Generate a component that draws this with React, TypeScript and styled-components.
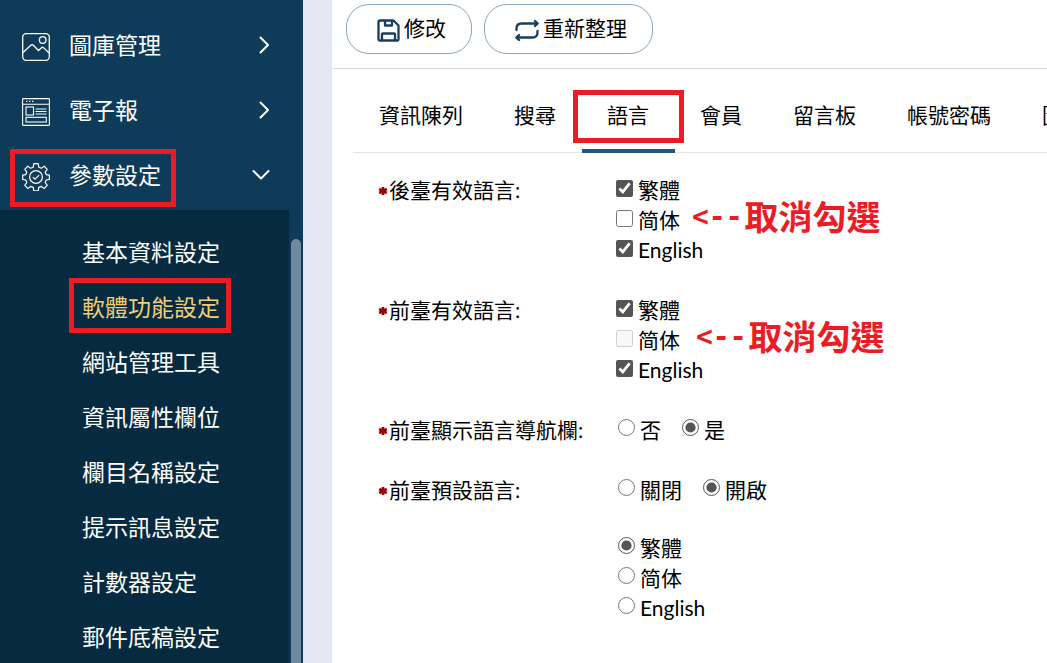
import React from 'react';
import styled, { createGlobalStyle } from 'styled-components';

const Global = createGlobalStyle`
  *, *::before, *::after { box-sizing: border-box; }
  body {
    margin: 0;
    background: #fff;
    color: #000;
    font-family: Lato, "Noto Sans CJK TC", sans-serif;
    font-size: 21px;
    line-height: 30px;
  }
  button { font: inherit; color: inherit; background: none; border: 0; padding: 0; cursor: pointer; white-space: nowrap; }
`;

const Page = styled.div`
  display: flex;
  height: 100vh;
  overflow: hidden;
`;

const Sidebar = styled.aside`
  flex: none;
  display: flex;
  width: 303px;
  background: #0d3b59;
  color: #fff;
  font-size: 23px;
`;

const Nav = styled.nav`
  flex: 1;
  display: flex;
  flex-direction: column;
  padding-top: 12px;
`;

const Track = styled.div`
  flex: none;
  width: 14px;
  display: flex;
  padding: 239px 2px 0;
`;

const Thumb = styled.div`
  flex: 1;
  border-radius: 5px 5px 0 0;
  background: #6f8a9f;
`;

const MenuButton = styled.button`
  && {
    position: relative;
    flex: none;
    display: flex;
    align-items: center;
    height: 65px;
    padding: 0 17px 0 22px;
    text-align: left;
  }
  svg:first-child {
    margin-top: 4px;
  }
`;

const MenuLabel = styled.span`
  flex: 1;
  margin-left: 19px;
`;

const SubMenu = styled.ul`
  flex: 1;
  margin: 3px 0 0;
  padding: 15px 0 0;
  list-style: none;
  background: #062a40;
`;

const SubLink = styled.a<{ $current?: boolean }>`
  position: relative;
  display: block;
  padding-left: 82px;
  line-height: 55px;
  color: ${(p) => (p.$current ? '#efce7b' : '#fff')};
  text-decoration: none;
`;

const Marker = styled.span<{ $top: number; $left: number; $width: number; $height: number }>`
  position: absolute;
  top: ${(p) => p.$top}px;
  left: ${(p) => p.$left}px;
  width: ${(p) => p.$width}px;
  height: ${(p) => p.$height}px;
  border: 5px solid #ed1c24;
  pointer-events: none;
`;

const Gutter = styled.div`
  flex: none;
  width: 29px;
  background: #e4e7f1;
`;

const Main = styled.main`
  flex: 1;
  min-width: 0;
  overflow: hidden;
`;

const Toolbar = styled.div`
  display: flex;
  gap: 12px;
  padding: 4px 14px 14px;
  border-bottom: 1px solid #dcdcdc;
`;

const ToolButton = styled.button`
  && {
    display: flex;
    align-items: center;
    gap: 4px;
    height: 50px;
    padding: 0 25px 2px 30px;
    border: 1px solid #8aa5bd;
    border-radius: 23px;
  }
  svg {
    margin-top: 4px;
  }
`;

const Tabs = styled.div`
  display: flex;
  margin: 14px 0 0 21px;
  padding-left: 1px;
  border-bottom: 1px solid #e4e4e4;
`;

const Tab = styled.button<{ $active?: boolean }>`
  && {
    position: relative;
    flex: none;
    height: 70px;
    margin-bottom: -1px;
    padding: 0 26px 2px 25px;
    border-bottom: 4px solid ${(p) => (p.$active ? '#1b577f' : 'transparent')};
  }
`;

const Form = styled.form`
  display: flex;
  flex-direction: column;
  gap: 30px;
  padding: 22px 20px 30px 46px;
`;

const Field = styled.fieldset`
  display: flex;
  margin: 0;
  padding: 0;
  border: 0;
`;

const FieldName = styled.div`
  flex: none;
  display: flex;
  align-items: center;
  gap: 1px;
  width: 238px;
  height: 30px;
`;

const OptionGroups = styled.div`
  display: flex;
  flex-direction: column;
  gap: 28px;
`;

const Options = styled.div<{ $inline?: boolean }>`
  display: flex;
  flex-direction: ${(p) => (p.$inline ? 'row' : 'column')};
  gap: ${(p) => (p.$inline ? 19 : 0)}px;
`;

const Line = styled.div`
  display: flex;
  height: 30px;
`;

const Option = styled.label`
  display: flex;
  align-items: center;
  height: 30px;
`;

const Check = styled.input`
  width: 17px;
  height: 17px;
  margin: 0 5px 4px 0;
  accent-color: #555;
`;

const Radio = styled.input`
  width: 17px;
  height: 17px;
  margin: 0 5px 5px 2px;
  accent-color: #555;
`;

const Note = styled.span<{ $indent: number }>`
  display: flex;
  align-items: center;
  gap: 2px;
  margin-left: ${(p) => p.$indent}px;
  height: 24px;
  color: #ed1c24;
  font-size: 34px;
  font-weight: 700;
`;

const Arrow = styled.span`
  font-family: "DejaVu Sans Mono", monospace;
  font-size: 28px;
`;

const GalleryIcon = () => (
  <svg width="28" height="28" viewBox="0 0 28 28" fill="none" stroke="#fff" strokeWidth="1.3" aria-hidden="true">
    <rect x="0.7" y="0.7" width="26.6" height="26.6" rx="3.5" />
    <circle cx="20.7" cy="7" r="3.3" />
    <path d="M1 19.500 8.800 12.300q1.300-1.200 2.600 0l5 5.200 2.800-2.600q1.300-1.200 2.600 0L27 20" />
  </svg>
);

const NewsIcon = () => (
  <svg width="28" height="28" viewBox="0 0 28 28" fill="none" stroke="#fff" strokeWidth="1.1" aria-hidden="true">
    <rect x="0.6" y="0.6" width="26.8" height="26.8" rx="0.8" />
    <path d="M1 6.200h26M4 3.400h1.400M7 3.400h1.400M10 3.400h1.400M13.500 11H24.500M13.500 13.500H24.500M13.500 16H24.500" />
    <rect x="4" y="9" width="7.5" height="8" />
    <rect x="4" y="19.3" width="20.3" height="4.7" />
  </svg>
);

const GearIcon = () => (
  <svg width="28" height="28" viewBox="0 0 28 28" fill="none" stroke="#fff" strokeWidth="1.2" strokeLinejoin="round" aria-hidden="true">
    <path d="M11.800.7h4.400l.6 3.500 2.500 1 2.900-2 3 3.100-2 2.900 1 2.400 3.200.5v4.300l-3.200.6-1 2.500 2 2.800-3 3.100-2.900-2-2.500 1-.6 3.400h-4.400l-.6-3.400-2.500-1-2.900 2-3-3.100 2-2.800-1-2.500L.7 16.400v-4.300l3.100-.5 1-2.400-2-2.900 3-3.100 2.900 2 2.500-1z" />
    <circle cx="14" cy="14" r="6.4" />
    <path d="m10.900 14.200 2.200 2 4-4" />
  </svg>
);

const Chevron = ({ down }: { down?: boolean }) =>
  down ? (
    <svg width="20" height="12" viewBox="0 0 20 12" fill="none" stroke="#fff" strokeWidth="2" strokeLinecap="round" strokeLinejoin="round" aria-hidden="true">
      <path d="m1.500 2 7.500 7.500L16.500 2" />
    </svg>
  ) : (
    <svg width="14" height="18" viewBox="0 0 14 18" fill="none" stroke="#fff" strokeWidth="2" strokeLinecap="round" strokeLinejoin="round" aria-hidden="true">
      <path d="m2.500 1.500 7.500 7.500-7.500 7.500" />
    </svg>
  );

const SaveIcon = () => (
  <svg width="23" height="23" viewBox="0 0 23 23" fill="none" stroke="#173f5c" strokeWidth="2.3" strokeLinejoin="round" aria-hidden="true">
    <path d="M3 1.500h13.500l5 5V20q0 1.500-1.500 1.500H3Q1.500 21.500 1.500 20V3Q1.500 1.500 3 1.500z" />
    <path d="M8 1.500v5h7v-5M5 21.500V15.500q0-1 1-1h11q1 0 1 1v6" />
  </svg>
);

const RefreshIcon = () => (
  <svg width="24" height="23" viewBox="0 0 24 23" fill="none" stroke="#173f5c" strokeWidth="2.3" strokeLinecap="round" strokeLinejoin="round" aria-hidden="true">
    <path d="M1.500 11V9.500Q1.500 4.500 6.500 4.500H21M22.500 12v1.500q0 5-5 5H3" />
    <path d="m20 2 2.700 2.500L20 7M4 16l-2.700 2.500L4 21" />
  </svg>
);

const Star = () => (
  <svg width="10" height="12" viewBox="0 0 10 12" stroke="#9c0000" strokeWidth="2.6" aria-hidden="true">
    <path d="M5 3v8M1.200 5l7.600 4M8.800 5 1.200 9" />
  </svg>
);

const submenu = ['基本資料設定', '軟體功能設定', '網站管理工具', '資訊屬性欄位', '欄目名稱設定', '提示訊息設定', '計數器設定', '郵件底稿設定'];
const tabs = ['資訊陳列', '搜尋', '語言', '會員', '留言板', '帳號密碼', '圖片'];

const LanguageChecks = ({ name, locked, indent }: { name: string; locked?: boolean; indent: number }) => (
  <Options>
    <Line><Option><Check type="checkbox" name={name} defaultChecked />繁體</Option></Line>
    <Line>
      <Option><Check type="checkbox" name={name} disabled={locked} />简体</Option>
      <Note $indent={indent}><Arrow>&lt;--</Arrow>取消勾選</Note>
    </Line>
    <Line><Option><Check type="checkbox" name={name} defaultChecked />English</Option></Line>
  </Options>
);

const RadioOptions = ({ name, items, selected, inline }: { name: string; items: string[]; selected: string; inline?: boolean }) => (
  <Options $inline={inline}>
    {items.map((item) => (
      <Option key={item}>
        <Radio type="radio" name={name} defaultChecked={item === selected} />
        {item}
      </Option>
    ))}
  </Options>
);

export default function App() {
  return (
    <>
      <Global />
      <Page>
        <Sidebar>
          <Nav>
            <MenuButton type="button"><GalleryIcon /><MenuLabel>圖庫管理</MenuLabel><Chevron /></MenuButton>
            <MenuButton type="button"><NewsIcon /><MenuLabel>電子報</MenuLabel><Chevron /></MenuButton>
            <MenuButton type="button" aria-expanded="true">
              <GearIcon /><MenuLabel>參數設定</MenuLabel><Chevron down />
              <Marker $top={7} $left={10} $width={166} $height={58} />
            </MenuButton>
            <SubMenu>
              {submenu.map((item) => (
                <li key={item}>
                  <SubLink href="#" $current={item === '軟體功能設定'}>
                    {item}
                    {item === '軟體功能設定' && <Marker $top={-2} $left={69} $width={162} $height={55} />}
                  </SubLink>
                </li>
              ))}
            </SubMenu>
          </Nav>
          <Track><Thumb /></Track>
        </Sidebar>
        <Gutter />
        <Main>
          <Toolbar>
            <ToolButton type="button"><SaveIcon />修改</ToolButton>
            <ToolButton type="button"><RefreshIcon />重新整理</ToolButton>
          </Toolbar>
          <Tabs role="tablist">
            {tabs.map((tab) => (
              <Tab key={tab} type="button" role="tab" aria-selected={tab === '語言'} $active={tab === '語言'}>
                {tab}
                {tab === '語言' && <Marker $top={7} $left={-9} $width={111} $height={53} />}
              </Tab>
            ))}
          </Tabs>
          <Form>
            <Field aria-label="後臺有效語言">
              <FieldName><Star />後臺有效語言:</FieldName>
              <LanguageChecks name="admin" indent={12} />
            </Field>
            <Field aria-label="前臺有效語言">
              <FieldName><Star />前臺有效語言:</FieldName>
              <LanguageChecks name="site" locked indent={16} />
            </Field>
            <Field aria-label="前臺顯示語言導航欄">
              <FieldName><Star />前臺顯示語言導航欄:</FieldName>
              <RadioOptions name="bar" items={['否', '是']} selected="是" inline />
            </Field>
            <Field aria-label="前臺預設語言">
              <FieldName><Star />前臺預設語言:</FieldName>
              <OptionGroups>
                <RadioOptions name="preset" items={['關閉', '開啟']} selected="開啟" inline />
                <RadioOptions name="language" items={['繁體', '简体', 'English']} selected="繁體" />
              </OptionGroups>
            </Field>
          </Form>
        </Main>
      </Page>
    </>
  );
}
